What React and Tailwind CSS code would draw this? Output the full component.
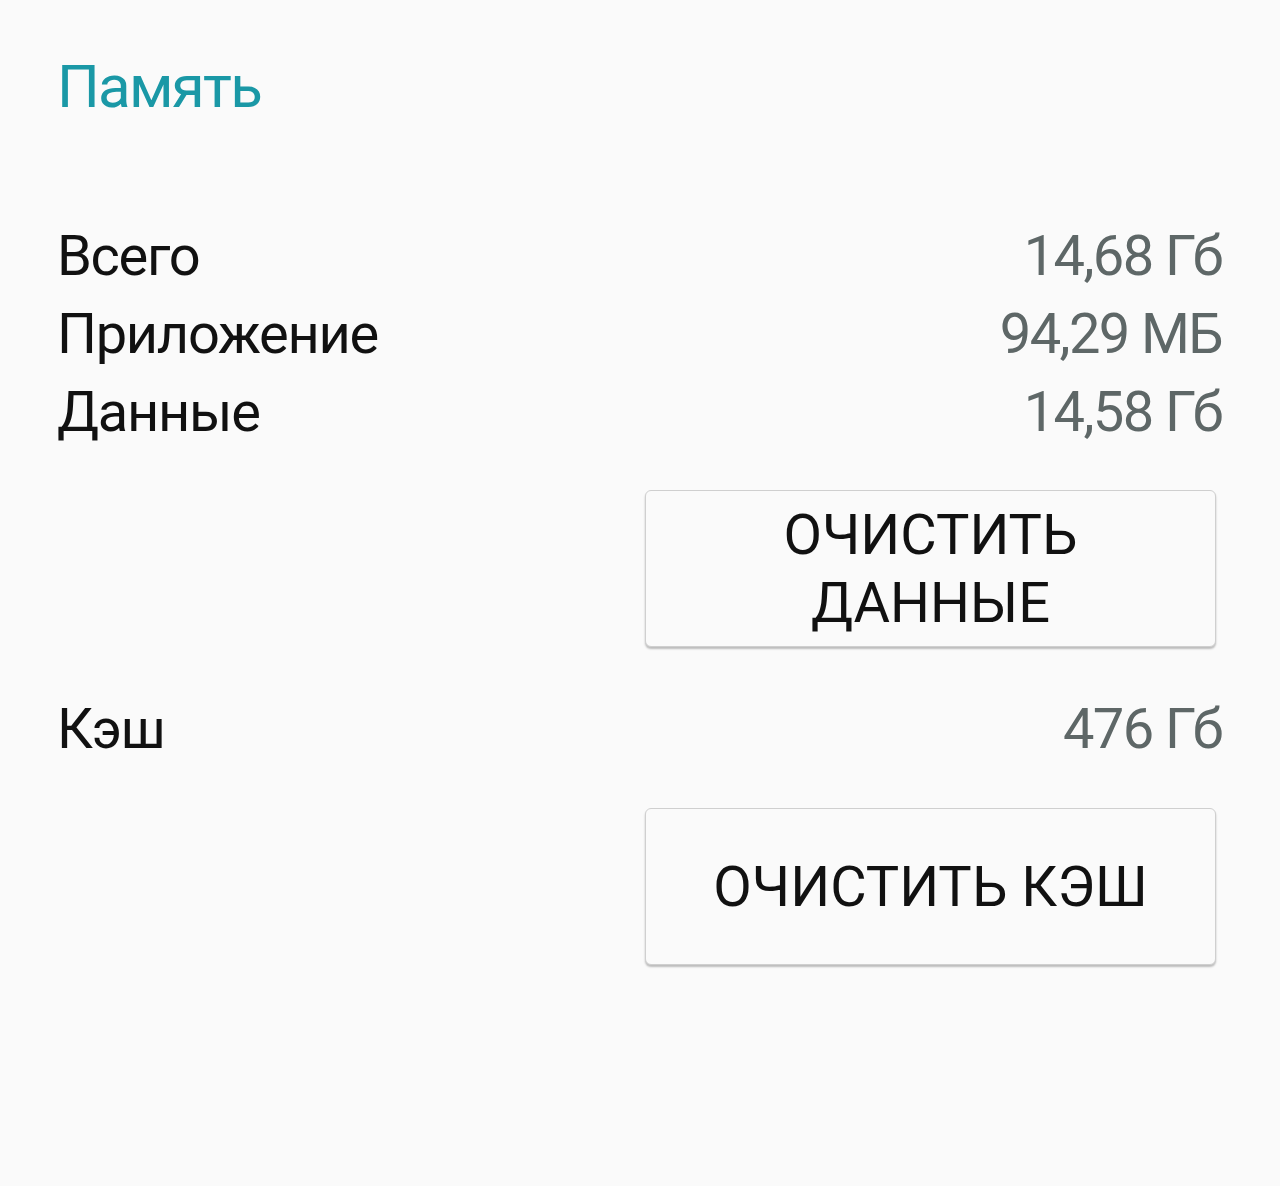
export default function App() {
  const rows = [
    ["Всего", "14,68 Гб"],
    ["Приложение", "94,29 МБ"],
    ["Данные", "14,58 Гб"],
  ];

  return (
    <div
      className="min-h-[1186px] w-[1280px] bg-[#fafafa] pl-[57px] pr-[58px] pt-[57px]"
      style={{ fontFamily: "Roboto, 'Noto Sans', sans-serif" }}
    >
      {/* заголовок */}
      <h1 className="text-[60px] leading-[60px] font-normal tracking-[-1.7px] text-[#1a98a6]">Память</h1>

      <div className="mt-[100px]">
        {rows.map(([label, value]) => (
          <div key={label} className="flex justify-between text-[56px] leading-[78px]">
            <span className="tracking-[-1.3px] text-[#111]">{label}</span>
            <span className="tracking-[-1.6px] text-[#5e6767]">{value}</span>
          </div>
        ))}
      </div>

      <div className="mt-[39px] flex justify-end pr-[6px]">
        <button
          type="button"
          className="flex h-[157px] w-[571px] flex-col items-center justify-center rounded-[6px] border border-[#cfcfcf] bg-[#fafafa] text-[56px] leading-[68px] text-[#111] shadow-[0_2px_2px_rgba(0,0,0,0.25)]"
        >
          <span>ОЧИСТИТЬ</span>
          <span>ДАННЫЕ</span>
        </button>
      </div>

      <div className="mt-[43px] flex justify-between text-[56px] leading-[78px]">
        <span className="tracking-[-1.3px] text-[#111]">Кэш</span>
        <span className="tracking-[-1.6px] text-[#5e6767]">476 Гб</span>
      </div>

      <div className="mt-[40px] flex justify-end pr-[6px]">
        <button
          type="button"
          className="flex h-[157px] w-[571px] items-center justify-center rounded-[6px] border border-[#cfcfcf] bg-[#fafafa] text-[56px] leading-[68px] text-[#111] shadow-[0_2px_2px_rgba(0,0,0,0.25)]"
        >
          ОЧИСТИТЬ КЭШ
        </button>
      </div>
    </div>
  );
}
